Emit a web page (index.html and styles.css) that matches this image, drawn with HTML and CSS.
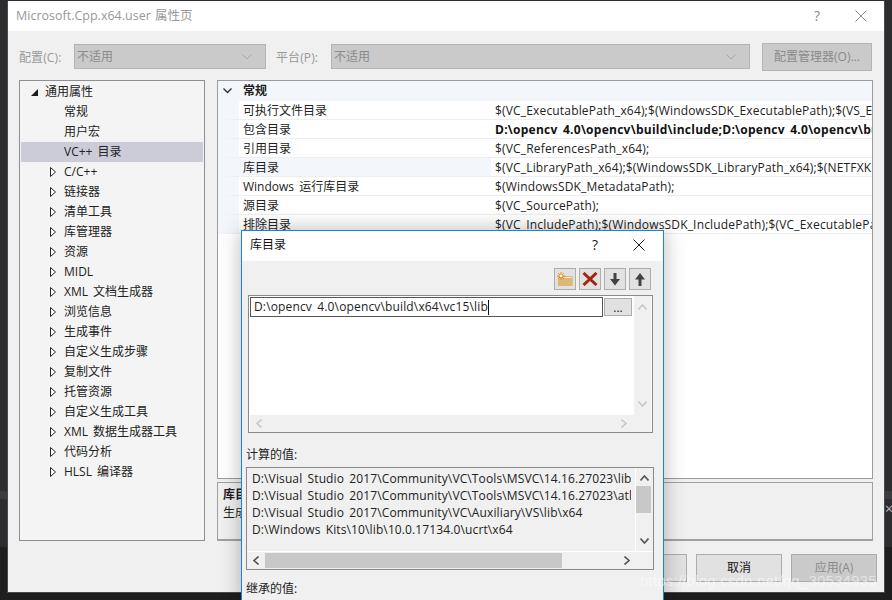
FILE: index.html
```html
<!DOCTYPE html>
<html lang="zh">
<head>
<meta charset="utf-8">
<title>属性页</title>
<link rel="stylesheet" href="styles.css">
</head>
<body>
<div class="desk">
  <div class="band"></div>
  <div class="band-x">×</div>
  <div class="desk-low"></div>
</div>

<section class="win">
  <header class="titlebar">
    <span class="win-title">Microsoft.Cpp.x64.user 属性页</span>
    <span class="win-help">?</span>
    <svg class="win-close" width="12" height="12" viewBox="0 0 12 12"><path d="M0.5 0.5L11.5 11.5M11.5 0.5L0.5 11.5" stroke="#8c8c8c" fill="none"/></svg>
  </header>
  <div class="win-body">
    <div class="configbar">
      <label class="cfg-label cfg-label-a">配置(C):</label>
      <div class="select select-a"><span>不适用</span><svg width="10" height="6" viewBox="0 0 10 6"><path d="M0.5 0.5L5 5L9.5 0.5" stroke="#a6a6a6" fill="none"/></svg></div>
      <label class="cfg-label cfg-label-b">平台(P):</label>
      <div class="select select-b"><span>不适用</span><svg width="10" height="6" viewBox="0 0 10 6"><path d="M0.5 0.5L5 5L9.5 0.5" stroke="#a6a6a6" fill="none"/></svg></div>
      <div class="cfg-btn">配置管理器(O)...</div>
    </div>
    <div class="panes">
      <nav class="tree">
        <div class="node n0"><svg class="tw" width="7" height="7" viewBox="0 0 7 7"><path d="M7 0V7H0Z" fill="#1a1a1a"/></svg>通用属性</div>
        <div class="node n1">常规</div>
        <div class="node n1">用户宏</div>
        <div class="node n1 sel">VC++ 目录</div>
        <div class="node n2"><svg class="tw" width="6" height="10" viewBox="0 0 6 10"><path d="M0.5 0.5L5.5 5L0.5 9.5Z" fill="#fff" stroke="#222"/></svg>C/C++</div>
        <div class="node n2"><svg class="tw" width="6" height="10" viewBox="0 0 6 10"><path d="M0.5 0.5L5.5 5L0.5 9.5Z" fill="#fff" stroke="#222"/></svg>链接器</div>
        <div class="node n2"><svg class="tw" width="6" height="10" viewBox="0 0 6 10"><path d="M0.5 0.5L5.5 5L0.5 9.5Z" fill="#fff" stroke="#222"/></svg>清单工具</div>
        <div class="node n2"><svg class="tw" width="6" height="10" viewBox="0 0 6 10"><path d="M0.5 0.5L5.5 5L0.5 9.5Z" fill="#fff" stroke="#222"/></svg>库管理器</div>
        <div class="node n2"><svg class="tw" width="6" height="10" viewBox="0 0 6 10"><path d="M0.5 0.5L5.5 5L0.5 9.5Z" fill="#fff" stroke="#222"/></svg>资源</div>
        <div class="node n2"><svg class="tw" width="6" height="10" viewBox="0 0 6 10"><path d="M0.5 0.5L5.5 5L0.5 9.5Z" fill="#fff" stroke="#222"/></svg>MIDL</div>
        <div class="node n2"><svg class="tw" width="6" height="10" viewBox="0 0 6 10"><path d="M0.5 0.5L5.5 5L0.5 9.5Z" fill="#fff" stroke="#222"/></svg>XML 文档生成器</div>
        <div class="node n2"><svg class="tw" width="6" height="10" viewBox="0 0 6 10"><path d="M0.5 0.5L5.5 5L0.5 9.5Z" fill="#fff" stroke="#222"/></svg>浏览信息</div>
        <div class="node n2"><svg class="tw" width="6" height="10" viewBox="0 0 6 10"><path d="M0.5 0.5L5.5 5L0.5 9.5Z" fill="#fff" stroke="#222"/></svg>生成事件</div>
        <div class="node n2"><svg class="tw" width="6" height="10" viewBox="0 0 6 10"><path d="M0.5 0.5L5.5 5L0.5 9.5Z" fill="#fff" stroke="#222"/></svg>自定义生成步骤</div>
        <div class="node n2"><svg class="tw" width="6" height="10" viewBox="0 0 6 10"><path d="M0.5 0.5L5.5 5L0.5 9.5Z" fill="#fff" stroke="#222"/></svg>复制文件</div>
        <div class="node n2"><svg class="tw" width="6" height="10" viewBox="0 0 6 10"><path d="M0.5 0.5L5.5 5L0.5 9.5Z" fill="#fff" stroke="#222"/></svg>托管资源</div>
        <div class="node n2"><svg class="tw" width="6" height="10" viewBox="0 0 6 10"><path d="M0.5 0.5L5.5 5L0.5 9.5Z" fill="#fff" stroke="#222"/></svg>自定义生成工具</div>
        <div class="node n2"><svg class="tw" width="6" height="10" viewBox="0 0 6 10"><path d="M0.5 0.5L5.5 5L0.5 9.5Z" fill="#fff" stroke="#222"/></svg>XML 数据生成器工具</div>
        <div class="node n2"><svg class="tw" width="6" height="10" viewBox="0 0 6 10"><path d="M0.5 0.5L5.5 5L0.5 9.5Z" fill="#fff" stroke="#222"/></svg>代码分析</div>
        <div class="node n2"><svg class="tw" width="6" height="10" viewBox="0 0 6 10"><path d="M0.5 0.5L5.5 5L0.5 9.5Z" fill="#fff" stroke="#222"/></svg>HLSL 编译器</div>
      </nav>
      <div class="right">
        <div class="grid">
          <div class="cat"><svg class="cat-tw" width="9" height="6" viewBox="0 0 9 6"><path d="M0.5 0.5L4.5 4.5L8.5 0.5" stroke="#333" stroke-width="1.4" fill="none"/></svg><b>常规</b></div>
          <div class="prop"><span class="pn">可执行文件目录</span><span class="pv">$(VC_ExecutablePath_x64);$(WindowsSDK_ExecutablePath);$(VS_ExecutablePath_x64)</span></div>
          <div class="prop"><span class="pn">包含目录</span><span class="pv bold">D:\opencv 4.0\opencv\build\include;D:\opencv 4.0\opencv\build\include\opencv2</span></div>
          <div class="prop"><span class="pn">引用目录</span><span class="pv">$(VC_ReferencesPath_x64);</span></div>
          <div class="prop"><span class="pn">库目录</span><span class="pv">$(VC_LibraryPath_x64);$(WindowsSDK_LibraryPath_x64);$(NETFXKitsDir)Lib</span></div>
          <div class="prop"><span class="pn">Windows 运行库目录</span><span class="pv">$(WindowsSDK_MetadataPath);</span></div>
          <div class="prop"><span class="pn">源目录</span><span class="pv">$(VC_SourcePath);</span></div>
          <div class="prop"><span class="pn">排除目录</span><span class="pv">$(VC_IncludePath);$(WindowsSDK_IncludePath);$(VC_ExecutablePath_x64)</span></div>
        </div>
        <div class="desc">
          <b>库目录</b>
          <span>生成 VC++ 项目期间，搜索库文件时使用的路径。</span>
        </div>
      </div>
    </div>
    <div class="actions">
      <div class="btn">确定</div>
      <div class="btn">取消</div>
      <div class="btn off">应用(A)</div>
    </div>
  </div>
</section>

<section class="dlg">
  <header class="dlg-title">
    <span class="dlg-name">库目录</span>
    <span class="dlg-help">?</span>
    <svg class="dlg-close" width="12" height="12" viewBox="0 0 12 12"><path d="M0.5 0.5L11.5 11.5M11.5 0.5L0.5 11.5" stroke="#1a1a1a" fill="none"/></svg>
  </header>
  <div class="dlg-body">
    <div class="tools">
      <div class="tool">
        <svg width="18" height="16" viewBox="0 0 18 16"><path d="M2 5H16.7V15H2Z" fill="#dcb67a"/><path d="M8.5 6.5H16" stroke="#f4e6cc"/><path d="M5 1V9M1 5H9M2.2 2.2L7.8 7.8M7.8 2.2L2.2 7.8" stroke="#e8900c"/><path d="M4 4H6V6H4Z" fill="#fff"/></svg>
      </div>
      <div class="tool">
        <svg width="16" height="14" viewBox="0 0 16 14"><path d="M1.5 1L14.5 13M14.5 1L1.5 13" stroke="#a1260d" stroke-width="3" fill="none"/></svg>
      </div>
      <div class="tool">
        <svg width="10" height="13" viewBox="0 0 10 13"><path d="M3.5 0H6.5V6H10L5 12.5L0 6H3.5Z" fill="#424242"/></svg>
      </div>
      <div class="tool">
        <svg width="10" height="13" viewBox="0 0 10 13"><path d="M3.5 13H6.5V6.5H10L5 0L0 6.5H3.5Z" fill="#424242"/></svg>
      </div>
    </div>
    <div class="editlist">
      <div class="editmain">
        <div class="editrow">
          <div class="editbox"><span>D:\opencv 4.0\opencv\build\x64\vc15\lib</span><i class="caret"></i></div>
          <div class="browse">...</div>
        </div>
        <div class="vbar vbar-off">
          <svg width="9" height="6" viewBox="0 0 9 6"><path d="M0.5 5.5L4.5 1L8.5 5.5" stroke="#c8c8c8" stroke-width="1.6" fill="none"/></svg>
          <svg width="9" height="6" viewBox="0 0 9 6"><path d="M0.5 0.5L4.5 5L8.5 0.5" stroke="#c8c8c8" stroke-width="1.6" fill="none"/></svg>
        </div>
      </div>
      <div class="hbar hbar-off">
        <svg width="6" height="9" viewBox="0 0 6 9"><path d="M5.5 0.5L1 4.5L5.5 8.5" stroke="#c8c8c8" stroke-width="1.6" fill="none"/></svg>
        <svg width="6" height="9" viewBox="0 0 6 9"><path d="M0.5 0.5L5 4.5L0.5 8.5" stroke="#c8c8c8" stroke-width="1.6" fill="none"/></svg>
      </div>
    </div>
    <div class="sect">计算的值:</div>
    <div class="vals">
      <div class="vals-main">
        <div class="vals-text">
          <div>D:\Visual Studio 2017\Community\VC\Tools\MSVC\14.16.27023\lib\x64</div>
          <div>D:\Visual Studio 2017\Community\VC\Tools\MSVC\14.16.27023\atlmfc\lib\x64</div>
          <div>D:\Visual Studio 2017\Community\VC\Auxiliary\VS\lib\x64</div>
          <div>D:\Windows Kits\10\lib\10.0.17134.0\ucrt\x64</div>
        </div>
        <div class="vbar vals-vbar">
          <svg class="arr-up" width="9" height="6" viewBox="0 0 9 6"><path d="M0.5 5.5L4.5 1L8.5 5.5" stroke="#555" stroke-width="1.6" fill="none"/></svg>
          <div class="vthumb"></div>
          <svg class="arr-dn" width="9" height="6" viewBox="0 0 9 6"><path d="M0.5 0.5L4.5 5L8.5 0.5" stroke="#555" stroke-width="1.6" fill="none"/></svg>
        </div>
      </div>
      <div class="hbar">
        <svg width="6" height="9" viewBox="0 0 6 9"><path d="M5.5 0.5L1 4.5L5.5 8.5" stroke="#555" stroke-width="1.6" fill="none"/></svg>
        <div class="hthumb"></div>
        <svg width="6" height="9" viewBox="0 0 6 9"><path d="M0.5 0.5L5 4.5L0.5 8.5" stroke="#555" stroke-width="1.6" fill="none"/></svg>
      </div>
    </div>
    <div class="sect sect2">继承的值:</div>
  </div>
</section>

<div class="watermark">https://blog.csdn.net/qq_30534935</div>
</body>
</html>
```
FILE: styles.css
```css
* { box-sizing: border-box; }
html, body { margin: 0; height: 100%; overflow: hidden; }
body {
  width: 892px; height: 600px; position: relative; background: #2d2d30;
  font: 12px/16px "Open Sans", "Noto Sans CJK SC", sans-serif; color: #1e1e1e;
  word-spacing: 2px;
}
.desk { position: absolute; inset: 0; overflow: hidden; }
.band { position: absolute; left: 0; right: 0; top: 491px; height: 8px; background: #3c3c3f; }
.band-x { position: absolute; right: 0; top: 501px; width: 7px; color: #bbb; font-size: 14px; line-height: 16px; }
.desk-low { position: absolute; left: 0; right: 0; top: 547px; bottom: 0; background: #1e1e1e; }

.win {
  position: absolute; left: 7px; top: 1px; width: 878px; height: 592px;
  background: #f0f0f0; border: 1px solid #4a4a4a; border-width: 0 1px 1px 1px;
  display: flex; flex-direction: column;
}
.titlebar { height: 30px; background: #fff; display: flex; align-items: center; padding-left: 8px; flex: none; }
.win-title { font-size: 12.5px; color: #999; flex: 1; word-spacing: 1px; }
.win-help { color: #8c8c8c; font-size: 14px; margin-right: 35px; }
.win-close { margin-right: 17px; }
.win-body { flex: 1; display: flex; flex-direction: column; padding: 13px 11px 10px 11px; min-height: 0; }

.configbar { display: flex; align-items: flex-start; height: 36px; flex: none; }
.cfg-label { color: #999; line-height: 27px; letter-spacing: .1px; }
.cfg-label-a { width: 55px; }
.cfg-label-b { width: 55px; margin-left: 10px; }
.select {
  height: 25px; background: #cacaca; border: 1px solid #b4b4b4; color: #8a8a8a;
  display: flex; align-items: center; justify-content: space-between; padding: 1px 13px 0 3px;
}
.select-a { width: 192px; }
.select-b { width: 419px; }
.select span { margin-left: -1px; }
.cfg-btn {
  width: 110px; height: 28px; margin-left: 12px; margin-top: -1px; background: #cacaca;
  border: 1px solid #b4b4b4; color: #8a8a8a; text-align: center; line-height: 26px;
}

.panes { display: flex; gap: 12px; height: 461px; flex: none; }
.tree { width: 186px; background: #f4f4f4; border: 1px solid #8e8f96; padding: 1px 1px; display: flex; flex-direction: column; flex: none; }
.node { height: 20px; line-height: 20px; display: flex; align-items: center; color: #222; flex: none; white-space: pre; }
.n0 { padding-left: 10px; }
.n0 .tw { margin-right: 7px; }
.n1 { padding-left: 43px; }
.n2 { padding-left: 29px; }
.n2 .tw { margin-right: 8px; }
.sel { background: #cbccd8; }

.right { width: 656px; display: flex; flex-direction: column; gap: 3px; flex: none; }
.grid { height: 399px; background: #fff; border: 1px solid #9a9a9f; overflow: hidden; flex: none; }
.cat { height: 20px; background: #f3f6fb; display: flex; align-items: center; padding-left: 5px; }
.cat-tw { margin-right: 11px; }
.prop { height: 19px; display: flex; border-left: 21px solid #f3f6fb; border-bottom: 1px solid #eeeeee; line-height: 20px; white-space: nowrap; }
.prop:nth-child(5) .pn { background: #f3f6fb; }
.pn { width: 252px; padding-left: 4px; flex: none; color: #222; }
.pv { padding-left: 4px; color: #222; overflow: hidden; letter-spacing: .17px; }
.pv.bold { font-weight: 700; color: #111; letter-spacing: .26px; }
.desc { height: 59px; background: #f0f0f0; border: 1px solid #a0a0a0; border-bottom-width: 2px; padding: 3px 5px; display: flex; flex-direction: column; line-height: 18px; overflow: hidden; }

.actions { display: flex; justify-content: flex-end; gap: 9px; margin-top: 13px; margin-right: -4px; }
.btn { width: 86px; height: 28px; background: #e1e1e1; border: 1px solid #adadad; text-align: center; line-height: 26px; color: #111; }
.off { background: #cacaca; color: #8a8a8a; }

.dlg {
  position: absolute; left: 241px; top: 230px; width: 423px; height: 380px; background: #f0f0f0;
  border: 1px solid #1883d7; box-shadow: 0 0 20px rgba(0,0,0,.28);
}
.dlg-title { height: 30px; background: #fff; display: flex; align-items: center; padding: 0 0 2px 8px; }
.dlg-name { flex: 1; font-size: 12px; color: #111; }
.dlg-help { margin-right: 35px; font-size: 14px; color: #222; }
.dlg-close { margin-right: 18px; }
.dlg-body { padding: 7px 9px 0 4px; display: flex; flex-direction: column; }
.tools { display: flex; justify-content: flex-end; gap: 3px; margin-right: 3px; height: 27px; }
.tool { width: 22px; height: 22px; background: #e1e1e1; border: 1px solid #adadad; display: flex; align-items: center; justify-content: center; }

.editlist { margin-left: 2px; margin-right: -1px; width: 405px; height: 138px; background: #fff; border: 1px solid #8a8a8a; display: flex; flex-direction: column; }
.editmain { flex: 1; display: flex; min-height: 0; }
.editrow { flex: 1; display: flex; align-items: flex-start; padding-left: 1px; padding-top: 1px; }
.editbox { width: 353px; height: 20px; border: 1px solid #555; background: #fff; padding-left: 3px; display: flex; align-items: center; color: #222; letter-spacing: .15px; }
.caret { width: 1px; height: 15px; background: #111; display: block; }
.browse { width: 28px; height: 18px; margin-left: 1px; margin-top: 1px; background: #e1e1e1; border: 1px solid #adadad; text-align: center; line-height: 17px; }
.vbar { width: 17px; flex: none; background: #f0f0f0; display: flex; flex-direction: column; align-items: center; justify-content: space-between; padding: 8px 0; margin-right: 1px; position: relative; }
.hbar { height: 17px; background: #f0f0f0; flex: none; display: flex; align-items: center; justify-content: space-between; padding: 0 24px 0 6px; position: relative; }
.hbar-off { margin: 0 1px 0 1px; }

.sect { margin-top: 14px; line-height: 16px; color: #222; height: 16px; }
.vals { margin-top: 4px; width: 408px; height: 103px; border: 1px solid #8a8a8a; background: #f0f0f0; display: flex; flex-direction: column; }
.vals-main { flex: 1; display: flex; min-height: 0; border-bottom: 1px solid #fff; }
.vals-text { width: 384px; flex: none; padding: 2px 0 0 5px; overflow: hidden; white-space: nowrap; letter-spacing: .12px; }
.vals-text div { height: 17px; line-height: 17px; color: #222; }
.vals-vbar { margin: 0 0 0 5px; box-shadow: -1px 0 0 #fff; padding: 7px 0; }
.vthumb { position: absolute; left: 0; top: 18px; width: 15px; height: 27px; background: #c8c8c8; }
.vals .hbar { height: 17px; padding: 0 23px 0 6px; }
.hthumb { position: absolute; left: 18px; top: 1px; width: 297px; height: 15px; background: #c8c8c8; }
.sect2 { margin-top: 11px; }

.watermark {
  position: absolute; left: 640px; top: 570px; font: 15px/22px "Liberation Sans", sans-serif; word-spacing: 0;
  color: rgba(255,255,255,.5); white-space: nowrap; letter-spacing: .2px;
}
```
